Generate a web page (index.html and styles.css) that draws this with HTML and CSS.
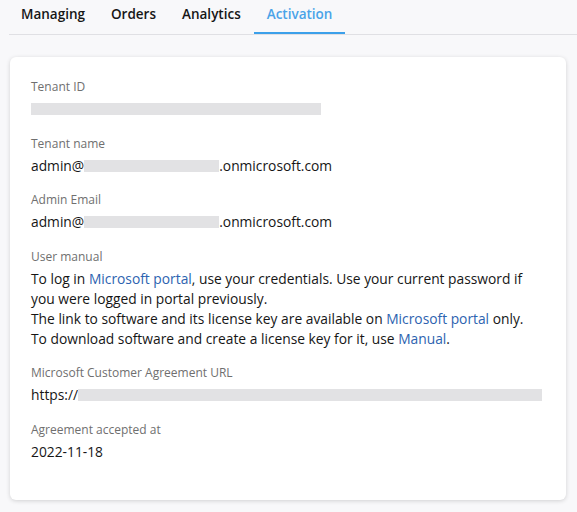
FILE: index.html
```html
<!DOCTYPE html>
<html lang="en">
<head>
<meta charset="utf-8">
<title>Activation</title>
<link rel="stylesheet" href="styles.css">
</head>
<body>
<nav class="tabs">
  <a class="tab">Managing</a>
  <a class="tab">Orders</a>
  <a class="tab">Analytics</a>
  <a class="tab active">Activation</a>
</nav>
<section class="card">
  <div class="field">
    <div class="label">Tenant ID</div>
    <div class="value"><span class="mask mask-id"></span></div>
  </div>
  <div class="field">
    <div class="label">Tenant name</div>
    <div class="value">admin@<span class="mask mask-name"></span>.onmicrosoft.com</div>
  </div>
  <div class="field">
    <div class="label">Admin Email</div>
    <div class="value">admin@<span class="mask mask-name"></span>.onmicrosoft.com</div>
  </div>
  <div class="field">
    <div class="label">User manual</div>
    <div class="value text">To log in <a class="link">Microsoft portal</a>, use your credentials. Use your current password if you were logged in portal previously.<br>The link to software and its license key are available on <a class="link">Microsoft portal</a> only.<br>To download software and create a license key for it, use <a class="link">Manual</a>.</div>
  </div>
  <div class="field">
    <div class="label">Microsoft Customer Agreement URL</div>
    <div class="value">https://<span class="mask mask-url"></span></div>
  </div>
  <div class="field">
    <div class="label">Agreement accepted at</div>
    <div class="value">2022-11-18</div>
  </div>
</section>
</body>
</html>
```
FILE: styles.css
```css
html, body {
  margin: 0;
  padding: 0;
}
body {
  background: #f8f8fa;
  font-family: "Open Sans", "Noto Sans", sans-serif;
  color: #161616;
  width: 577px;
  height: 512px;
  overflow: hidden;
}
.tabs {
  display: flex;
  margin-left: 9px;
  padding-left: 0;
  border-bottom: 1px solid #e0e0e4;
  height: 35px;
  box-sizing: border-box;
}
.tab {
  display: flex;
  align-items: center;
  padding: 0 13px 4px;
  font-size: 13.5px;
  font-weight: 600;
  color: #161616;
  height: 34px;
  box-sizing: border-box;
  border-bottom: 2px solid transparent;
  margin-bottom: -1px;
}
.tab:first-child {
  padding-left: 12px;
}
.tab.active {
  color: #4aa3e8;
  border-bottom-color: #3ca0ea;
}
.card {
  margin: 22px 11px 0 10px;
  background: #fff;
  border-radius: 6px;
  box-shadow: 0 1px 4px rgba(0, 0, 0, 0.16);
  padding: 22px 21px 23px;
  height: 443px;
  box-sizing: border-box;
}
.field {
  margin-bottom: 16.5px;
}
.label {
  font-size: 12px;
  line-height: 16px;
  color: #6f6f6f;
  margin-bottom: 4px;
}
.value {
  font-size: 13.8px;
  line-height: 20px;
  min-height: 20px;
  color: #161616;
  display: flex;
  align-items: center;
}
.value.text {
  display: block;
}
.link {
  color: #2d63b0;
}
.mask {
  display: inline-block;
  height: 12px;
  background: #e2e2e4;
}
.mask-id {
  width: 290px;
}
.mask-name {
  width: 135px;
}
.mask-url {
  width: 464px;
}
```
